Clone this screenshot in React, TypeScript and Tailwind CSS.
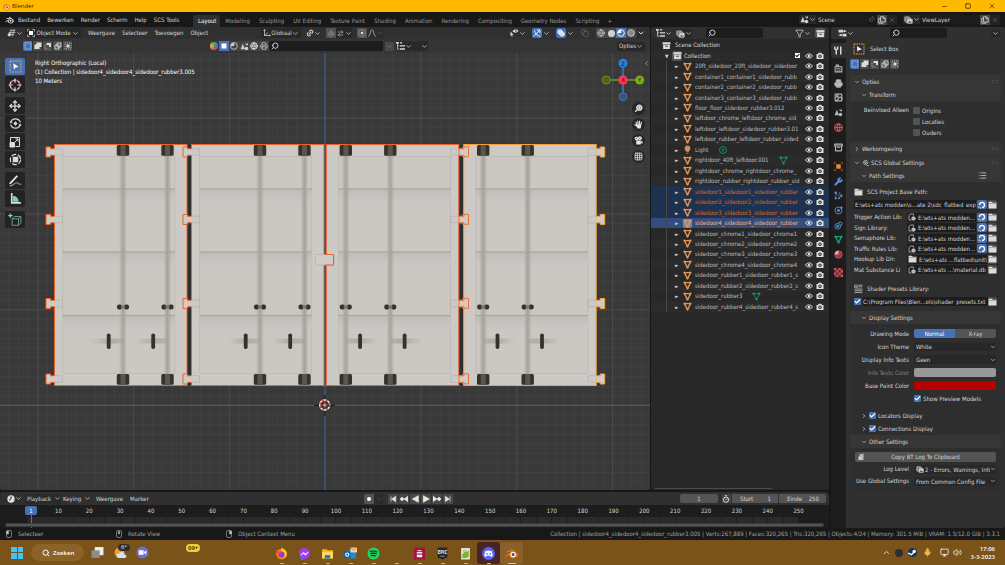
import type { ReactNode } from "react";
import {
  ArrowUpDown, Check, ChevronDown, ChevronRight, ChevronLeft, ChevronUp, Circle, Copy, Filter,
  Globe, Grid3x3, Image, Link2, Magnet, Mic, Minus, Move, Pin, Printer, Search,
  Square, Timer, Volume2, Wrench, X, Monitor, Archive, Blend, List,
} from "lucide-react";

const menus = ["Bestand", "Bewerken", "Render", "Scherm", "Help", "SCS Tools"];

const workspaces = [
  "Layout", "Modeling", "Sculpting", "UV Editing", "Texture Paint", "Shading", "Animation",
  "Rendering", "Compositing", "Geometry Nodes", "Scripting",
];

type Item = { name: string; kind?: "light"; data?: "mesh" | "light"; state?: "selected" | "active" };

const objects: Item[] = [
  { name: "20ft_sidedoor_20ft_sidedoor_sidedoor" },
  { name: "container1_container1_sidedoor_rubb" },
  { name: "container2_container2_sidedoor_rubb" },
  { name: "container3_container3_sidedoor_rubb" },
  { name: "floor_floor_sidedoor_rubber3.012" },
  { name: "leftdoor_chrome_leftdoor_chrome_sid" },
  { name: "leftdoor_leftdoor_sidedoor_rubber3.01" },
  { name: "leftdoor_rubber_leftdoor_rubber_sided" },
  { name: "Light", kind: "light", data: "light" },
  { name: "rightdoor_40ft_leftdoor.001", data: "mesh" },
  { name: "rightdoor_chrome_rightdoor_chrome_" },
  { name: "rightdoor_rubber_rightdoor_rubber_sid" },
  { name: "sidedoor1_sidedoor1_sidedoor_rubber", state: "selected" },
  { name: "sidedoor2_sidedoor2_sidedoor_rubber", state: "selected" },
  { name: "sidedoor3_sidedoor3_sidedoor_rubber", state: "selected" },
  { name: "sidedoor4_sidedoor4_sidedoor_rubber", state: "active" },
  { name: "sidedoor_chrome1_sidedoor_chrome1" },
  { name: "sidedoor_chrome2_sidedoor_chrome2" },
  { name: "sidedoor_chrome3_sidedoor_chrome3" },
  { name: "sidedoor_chrome4_sidedoor_chrome4" },
  { name: "sidedoor_rubber1_sidedoor_rubber1_s" },
  { name: "sidedoor_rubber2_sidedoor_rubber2_s" },
  { name: "sidedoor_rubber3", data: "mesh" },
  { name: "sidedoor_rubber4_sidedoor_rubber4_s" },
];

const libraries = [
  { label: "Trigger Action Lib:", path: "E:\\ets+ats modden...", snap: true },
  { label: "Sign Library:", path: "E:\\ets+ats modden...", snap: true },
  { label: "Semaphore Lib:", path: "E:\\ets+ats modden...", snap: true },
  { label: "Traffic Rules Lib:", path: "E:\\ets+ats modden...", snap: true },
  { label: "Hookup Lib Dir:", path: "E:\\ets+ats ...flatbed\\unit\\", folder: true },
  { label: "Mat Substance Li", path: "E:\\ets+ats ...\\material.db" },
];

/* ---------- icons ---------- */

function BlenderLogo({ className, mono }: { className?: string; mono?: boolean }) {
  const c = mono ? "#d8d8d8" : "#ea7600";
  return (
    <svg viewBox="0 0 24 20" className={className}>
      <path d="M1 14.500 11 7H3.500V5H13L10.500 3 12.200 1 22 8.500c3 3 2 10-6.500 10.500-4.500 0-8-3-8-6.500L3 16z" fill={c} />
      <circle cx="15" cy="12" r="5" fill={mono ? "#181818" : "#fff"} />
      <circle cx="15" cy="12" r="2.800" fill={mono ? c : "#265787"} />
    </svg>
  );
}

function Chev({ className = "size-[7px] text-[#bdbdbd]" }: { className?: string }) {
  return <ChevronDown className={`shrink-0 ${className}`} strokeWidth={3} />;
}

function EyeIcon() {
  return (
    <svg viewBox="0 0 16 16" className="size-[8px] shrink-0" fill="none" stroke="#e0e0e0" strokeWidth="1.800">
      <path d="M1 8c3-5.500 11-5.500 14 0-3 5.500-11 5.500-14 0z" /><circle cx="8" cy="8" r="2.600" fill="#e0e0e0" stroke="none" />
    </svg>
  );
}

function CameraIcon() {
  return (
    <svg viewBox="0 0 16 16" className="size-[8px] shrink-0">
      <path d="M1 4h3l1.500-2.500h5L12 4h3v10H1z" fill="#e0e0e0" /><circle cx="8" cy="8.500" r="3.300" fill="#2b2b2b" /><circle cx="8" cy="8.500" r="1.500" fill="#e0e0e0" />
    </svg>
  );
}

function VisibilityIcon() {
  return (
    <svg viewBox="0 0 18 16" className="h-[8px] w-[9px] shrink-0" fill="#dcdcdc">
      <path d="M5 5C8 0 14 0 17 4c-3 4-8 4-10 2z" /><circle cx="12" cy="4" r="1.600" fill="#303030" /><path d="M1 5l6 6.500-3 .3 1.500 3-1.600.8-1.400-3L1 14z" />
    </svg>
  );
}

function MagnifierIcon() {
  return (
    <svg viewBox="0 0 16 16" className="size-[9px]" fill="none" stroke="#e6e6e6" strokeWidth="2.400">
      <circle cx="9.500" cy="6.500" r="4.500" fill="#8a8a8a" /><path d="M6 10l-4 4M7.500 6.500h4M9.500 4.500v4" />
    </svg>
  );
}

function HandIcon() {
  return (
    <svg viewBox="0 0 16 16" className="size-[9px]" fill="none" stroke="#e6e6e6" strokeWidth="1.900" strokeLinecap="round">
      <path d="M5 9L3.500 4M7.200 8L6.700 2M9.500 8l.5-6M11.500 9l1.700-5M5 11L1.500 8.500" /><path d="M4.500 9h7.500l-1 5H7z" fill="#e6e6e6" />
    </svg>
  );
}

function MovieIcon() {
  return (
    <svg viewBox="0 0 16 16" className="size-[9px]" fill="#e6e6e6">
      <circle cx="4.500" cy="4.500" r="3.300" /><circle cx="10.500" cy="4" r="3.500" /><path d="M4 8h8v2l3-1.500V14l-3-1.500V15H4z" />
      <circle cx="4.500" cy="4.500" r="1" fill="#262626" /><circle cx="10.500" cy="4" r="1.100" fill="#262626" />
    </svg>
  );
}

function MeshIcon({ color, thin }: { color: string; thin?: boolean }) {
  return (
    <svg viewBox="0 0 16 16" className="size-[9px] shrink-0">
      <path d="M2.500 3h11L8 13.500z" fill="none" stroke={color} strokeWidth={thin ? 1.400 : 2.400} strokeLinejoin="round" />
      <g fill={color}><circle cx="2.800" cy="3" r="1.900" /><circle cx="13.200" cy="3" r="1.900" /><circle cx="8" cy="13.200" r="1.900" /></g>
    </svg>
  );
}

function LightIcon() {
  return (
    <svg viewBox="0 0 16 16" className="size-[9px] shrink-0" fill="#d9894e">
      <circle cx="8" cy="6" r="5" /><path d="M5.500 11h5v2h-5zM6.500 14h3v1.500h-3z" />
    </svg>
  );
}

function TreeIcon() {
  return (
    <svg viewBox="0 0 16 14" className="h-[8px] w-[9px] shrink-0" fill="#d8d8d8">
      <path d="M0 0h5v3H0zM7 5.500h9v2.500H7zM7 11h9v2.500H7zM7 .5h4v2H7zM2 3h1.300v10H2zM3 6h3v1.300H3zM3 11.700h3V13H3z" />
    </svg>
  );
}

function EditorIcon() {
  return (
    <svg viewBox="0 0 16 14" className="h-[8px] w-[9px] shrink-0" fill="none" stroke="#d0d0d0" strokeWidth="1.400">
      <path d="M5 2h10M3 6h12M1 10h12M8 1L4 13M13 1L9 13" /><circle cx="4" cy="10" r="2.600" fill="#e0e0e0" stroke="none" />
    </svg>
  );
}

function PropsIcon() {
  return (
    <svg viewBox="0 0 16 14" className="h-[8px] w-[9px] shrink-0" fill="#d8d8d8">
      <path d="M1 1h8v5H1zM10 3h5v1.500h-5zM8 8.500h7v4.500H8zM1 10h6v1.500H1z" />
      <circle cx="11.500" cy="3.700" r="2" /><circle cx="5" cy="10.700" r="2" />
    </svg>
  );
}

function FolderIcon() {
  return (
    <svg viewBox="0 0 16 14" className="h-[8px] w-[9px] shrink-0">
      <path d="M1 1h6l1.500 2H15v10H1z" fill="#dcdcdc" /><path d="M1 4.500h14" stroke="#777" strokeWidth="1" />
    </svg>
  );
}

function FileIcon() {
  return (
    <svg viewBox="0 0 16 16" className="size-[8px] shrink-0" fill="none" stroke="#c4c4c4" strokeWidth="1.600">
      <path d="M7 14H2V5l3-3h6v3" /><circle cx="11" cy="11" r="3.500" fill="#c4c4c4" /><circle cx="11" cy="11" r="1" fill="#1d1d1d" />
    </svg>
  );
}

function CollectionIcon() {
  return (
    <svg viewBox="0 0 16 16" className="size-[9px] shrink-0" fill="#dedede">
      <path d="M1 2h14v4H1zM2 7h12v7H2z" /><path d="M5.500 8.500h5v1.500h-5z" fill="#2b2b2b" />
    </svg>
  );
}

function SceneIcon({ color = "#d0d0d0" }: { color?: string }) {
  return (
    <svg viewBox="0 0 16 16" className="size-[9px] shrink-0" fill={color}>
      <path d="M5 3l4 10H1z" /><circle cx="11.500" cy="11.500" r="3.200" /><path d="M9 2l3 1.500 1-2.500 1.500 5-4-.5z" />
    </svg>
  );
}

function PagesIcon() {
  return (
    <svg viewBox="0 0 16 16" className="size-[8px] shrink-0" fill="none" stroke="#d8d8d8" strokeWidth="1.600">
      <path d="M4 5H1.500v9.500H10V13" /><path d="M5 1.500h6l3.500 3.500v7H5zM10.500 1.500V5.500h4" />
    </svg>
  );
}

function LayersIcon({ className = "size-[9px]" }: { className?: string }) {
  return (
    <svg viewBox="0 0 16 16" className={`shrink-0 ${className}`} fill="none" stroke="#d0d0d0" strokeWidth="1.500">
      <path d="M3 11H1.500V3.500h8V5M5 13H3.500V5.500h8V7" /><path d="M6 7.500h8.500v7H6z" fill="#d0d0d0" /><path d="M7 13.500l2.500-3 2 2 1-1 1.500 2z" fill="#333" stroke="none" />
    </svg>
  );
}

function SelectModes() {
  return (
    <div className="flex" role="group" aria-label="Selection mode">
      {[0, 1, 2, 3, 4].map((i) => (
        <button key={i} aria-label={`Mode ${i + 1}`} className={`grid size-[10px] place-items-center border-r border-[#2c2c2c] ${i === 0 ? "rounded-l-[2px] bg-[#4772b3]" : "bg-[#4c4c4c]"}`}>
          <svg viewBox="0 0 16 16" className="size-[8px]" fill="none" strokeWidth="1.800">
            {i === 0 && <path d="M2 2h12v12H2z" stroke="#b9d2ff" strokeDasharray="2 1.500" />}
            {i === 1 && <path d="M5 1h10v9h-4v4H1V5h4z" fill="#dcdcdc" />}
            {i === 2 && <><path d="M5 2h9v8h-4V6H5z" fill="#dcdcdc" /><path d="M2 6v8h7" stroke="#bbb" strokeDasharray="2 1.500" /></>}
            {i === 3 && <><path d="M2 6h8v8H2zM6 2h8v8H6z" stroke="#dcdcdc" /></>}
            {i === 4 && <><path d="M2 2h12v12H2z" stroke="#bbb" strokeDasharray="2 2" /><path d="M5 5h6v6H5z" fill="#dcdcdc" /></>}
          </svg>
        </button>
      ))}
    </div>
  );
}

function CursorBox({ className }: { className: string }) {
  return (
    <svg viewBox="0 0 24 24" className={className} fill="none">
      <path d="M2 2h20v20H2z" stroke="#eaa93c" strokeWidth="2" strokeDasharray="3 1.800" />
      <path d="M8 6l10 7-6 1-3 4z" fill="#fff" />
    </svg>
  );
}

/* ---------- small controls ---------- */

function Tick({ id, checked }: { id: string; checked?: boolean }) {
  return (
    <span className="relative size-[7px] shrink-0">
      <input id={id} type="checkbox" defaultChecked={checked} className="peer block size-[7px] appearance-none rounded-[1px] bg-[#545454] checked:bg-[#4772b3]" />
      <Check className="pointer-events-none absolute inset-0 hidden size-[7px] text-white peer-checked:block" strokeWidth={4} />
    </span>
  );
}

function SearchBox({ label, className }: { label: string; className: string }) {
  return (
    <label className={`flex items-center rounded-[2px] bg-[#1d1d1d] pl-[2px] ${className}`}>
      <Search className="size-[8px] shrink-0 -scale-x-100 text-[#c8c8c8]" strokeWidth={3} />
      <input aria-label={label} className="h-[9px] w-0 min-w-0 flex-1 bg-transparent outline-none" />
    </label>
  );
}

function Row({ label, id, dim, tight, children }: { label: string; id: string; dim?: boolean; tight?: boolean; children: ReactNode }) {
  return (
    <div className={`flex items-center gap-[5px] ${tight ? "h-[12px]" : "h-[13px]"}`}>
      <label htmlFor={id} className={`flex w-[54px] shrink-0 justify-end whitespace-nowrap ${dim ? "text-[#808080]" : ""}`}>{label}</label>
      {children}
    </div>
  );
}

function Select({ id, value, icon }: { id: string; value: string; icon?: ReactNode }) {
  return (
    <span className="flex h-[9px] min-w-0 flex-1 items-center rounded-[2px] bg-[#282828] pl-[2px]">
      {icon}
      <select id={id} className="h-[9px] w-0 min-w-0 flex-1 appearance-none bg-transparent leading-[9px] outline-none">
        <option>{value}</option>
      </select>
      <Chev className="size-[6px] text-[#bdbdbd]" />
    </span>
  );
}

function Heading({ children, sub, open = true, icon, end }: { children: ReactNode; sub?: boolean; open?: boolean; icon?: ReactNode; end?: ReactNode }) {
  return (
    <h3 className={`flex h-[13px] items-center gap-[2px] bg-[#363636] pr-[3px] ${sub ? "pl-[11px]" : "pl-[4px]"}`}>
      {open ? <Chev className="size-[6px] text-[#bdbdbd]" /> : <ChevronRight className="size-[6px] text-[#bdbdbd]" strokeWidth={3} />}
      {icon}
      <span className="flex-1 truncate">{children}</span>
      {end}
      {!sub && <span className="h-[3px] w-[6px] border-y border-dotted border-[#4c4c4c]" />}
    </h3>
  );
}

/* ---------- 3D scene ---------- */

function Hinge({ y, stroke }: { y: number; stroke: string }) {
  return (
    <g>
      <path d={`M-8.500 ${y - 5}h4.500v1.800h4v6.500h-4v1.700h-4.500z`} fill="#cfccc7" stroke={stroke} strokeWidth="1" />
      <rect x="-.5" y={y - 3} width="8.500" height="6" fill="#cdcac5" />
      <path d={`M0 ${y - 3.300}h8v6.600H0`} fill="none" stroke="#aaa7a2" strokeWidth=".5" />
    </g>
  );
}

function Door({ x, stroke, flip }: { x: number; stroke: string; flip?: boolean }) {
  return (
    <g transform={flip ? `translate(${x + 132.500} 0) scale(-1 1)` : `translate(${x} 0)`}>
      <rect x="0" y="117.500" width="132.500" height="241" fill="#cdcac5" stroke={stroke} strokeWidth="1" />
      <rect x="8.300" y="129.500" width="112" height="217" fill="#cbc8c3" stroke="#b4b1ac" strokeWidth=".6" />
      {[162, 225, 288.500].map((y) => (
        <g key={y}>
          <rect x="8.300" y={y} width="112" height="12" fill="url(#rib)" />
          <rect x="8.300" y={y - 0.600} width="112" height="1.200" fill="#a9a6a0" />
          <rect x="8.300" y={y + 11.500} width="112" height="1.300" fill="#c6c8cd" />
        </g>
      ))}
      {[68.500, 113].map((bx) => (
        <g key={bx}>
          <rect x={bx - 4} y="118" width="8" height="240" fill="url(#rod)" />
          {[118, 347].map((y) => (
            <g key={y}>
              <rect x={bx - 6.200} y={y} width="12.400" height="10.800" rx="1.500" fill="#35322a" />
              <rect x={bx - 2.500} y={y} width="5" height="10.800" fill="#59564e" />
            </g>
          ))}
          <rect x={bx - 6} y="277.500" width="5" height="5" rx="2" fill="#35322a" />
          <rect x={bx + 1} y="277.500" width="5" height="5" rx="2" fill="#35322a" />
          <rect x={bx - 2} y="278.500" width="4" height="3" fill="#77746d" />
          <rect x={bx - 33} y="311.500" width="33" height="5" fill="url(#arm)" />
          <rect x={bx - 16.200} y="306.500" width="3.800" height="15.500" rx="1.800" fill="#35322a" />
        </g>
      ))}
      {[125, 192.500, 276.500, 352].map((y) => <Hinge key={y} y={y} stroke={stroke} />)}
    </g>
  );
}

function Scene() {
  return (
    <svg viewBox="0 0 650 463" preserveAspectRatio="xMidYMid slice" className="absolute inset-0 size-full">
      <defs>
        <pattern id="minor" width="9.580" height="9.580" patternUnits="userSpaceOnUse" x="324.700" y="378">
          <path d="M0 0H9.580M0 0V9.580" stroke="#454545" strokeWidth="1" />
        </pattern>
        <pattern id="major" width="95.800" height="95.800" patternUnits="userSpaceOnUse" x="324.700" y="378">
          <path d="M0 0H95.800M0 0V95.800" stroke="#4e4e4e" strokeWidth="1.400" />
        </pattern>
        <linearGradient id="rod">
          <stop offset="0" stopColor="#a5a299" stopOpacity="0" /><stop offset=".5" stopColor="#a5a29b" /><stop offset="1" stopColor="#a5a299" stopOpacity="0" />
        </linearGradient>
        <linearGradient id="arm" x1="0" x2="1">
          <stop offset="0" stopColor="#a5a299" stopOpacity="0" /><stop offset=".6" stopColor="#a09d95" stopOpacity=".7" /><stop offset="1" stopColor="#a5a299" stopOpacity=".5" />
        </linearGradient>
        <linearGradient id="rib" x2="0" y2="1">
          <stop offset="0" stopColor="#c0bdb8" /><stop offset="1" stopColor="#cac7c2" />
        </linearGradient>
      </defs>
      <rect width="650" height="463" fill="#393939" />
      <rect width="650" height="463" fill="url(#minor)" />
      <rect width="650" height="463" fill="url(#major)" />
      <path d="M0 378.300H650" stroke="#4e6630" strokeWidth="1.200" />
      <path d="M324.800 0V463" stroke="#3a5778" strokeWidth="1.300" />
      <path d="M189 118V358M461.300 118V358" stroke="#2f2f2f" strokeWidth="4" />
      <Door x={54.500} stroke="#f0602c" />
      <Door x={191.500} stroke="#f0602c" />
      <Door x={326.300} stroke="#f0602c" flip />
      <Door x={463.700} stroke="#f3a13f" flip />
      {/* the hinges of door 3 lie over door 4 */}
      {[125, 192.500, 276.500, 352].map((y) => (
        <path key={y} d={`M459 ${y - 3.200}h5v-2h4.500v10h-4.500v-1.500h-5z`} fill="#cfccc7" stroke="#f0703a" strokeWidth="1" />
      ))}
      <path d="M325 118V358" stroke="#65595c" strokeWidth="1.400" />
      <rect x="315.500" y="227.500" width="18.500" height="10.500" rx="1" fill="#d0cdc8" stroke="#b3b0aa" strokeWidth=".7" />
      <path d="M325 227.500h8.500v10.500H325" fill="none" stroke="#f0602c" />
      <path d="M314 378.300h7M328 378.300h7M324.800 368v6M324.800 383v6" stroke="#111" strokeWidth="1" />
      <circle cx="324.700" cy="378" r="5" fill="none" stroke="#fff" strokeWidth="1.300" />
      <circle cx="324.700" cy="378" r="5" fill="none" stroke="#d33" strokeWidth="1.300" strokeDasharray="2 2" />
      <circle cx="324.700" cy="378" r="1.500" fill="#ff9a1e" />
    </svg>
  );
}

function Gizmo() {
  return (
    <svg viewBox="0 0 44 44" className="size-[44px]" fontSize="6" textAnchor="middle">
      <path d="M5 22h34" stroke="#6b9a1c" strokeWidth="1.400" /><path d="M22 5v34" stroke="#3d7fc9" strokeWidth="1.400" />
      <circle cx="5.300" cy="22" r="4" fill="#4b611f" stroke="#6b9a1c" />
      <circle cx="22" cy="38.700" r="4" fill="#38557a" stroke="#3873ba" />
      <circle cx="22" cy="5.300" r="4.500" fill="#2c7fdd" /><circle cx="38.700" cy="22" r="4.500" fill="#79ae13" /><circle cx="22" cy="22" r="4.700" fill="#ff3653" />
      <g fill="#111"><text x="22" y="7.500">Z</text><text x="38.700" y="24.200">Y</text><text x="22" y="24.200">X</text></g>
    </svg>
  );
}

const tools: { name: string; art: ReactNode }[][] = [
  [
    { name: "Select Box", art: <CursorBox className="size-[13px]" /> },
    { name: "Cursor", art: <svg viewBox="0 0 24 24" className="size-[14px]" fill="none" strokeWidth="2"><circle cx="12" cy="12" r="8.500" stroke="#e8e8e8" /><circle cx="12" cy="12" r="8.500" stroke="#c2453c" strokeDasharray="4 4" /><path d="M12 1v7M12 16v7M1 12h7M16 12h7" stroke="#ddd" /></svg> },
  ],
  [
    { name: "Move", art: <Move className="size-[12px]" strokeWidth={2.500} /> },
    { name: "Rotate", art: <svg viewBox="0 0 24 24" className="size-[13px]" fill="none" stroke="currentColor" strokeWidth="2.200"><path d="M3 10a9.500 9.500 0 0 1 18 0M21 14a9.500 9.500 0 0 1-18 0" /><path d="M12 8l4 4-4 4-4-4zM1 8l2 4 4-3zM23 16l-2-4-4 3z" fill="currentColor" stroke="none" /></svg> },
    { name: "Scale", art: <svg viewBox="0 0 24 24" className="size-[12px]" fill="none" stroke="currentColor" strokeWidth="2"><path d="M3 12V3h18v18h-8" /><path d="M2 13h9v9H2z" fill="currentColor" /><path d="M12 12l6-6M13 6h5v5" /></svg> },
    { name: "Transform", art: <svg viewBox="0 0 24 24" className="size-[13px]" fill="none" stroke="currentColor" strokeWidth="2.200"><circle cx="12" cy="12" r="9.500" strokeDasharray="9 3" /><path d="M8 8h8v8H8z" fill="currentColor" /></svg> },
  ],
  [
    { name: "Annotate", art: <svg viewBox="0 0 24 24" className="size-[14px]" fill="none" strokeWidth="3"><path d="M3 17L16 3" stroke="#eee" /><path d="M3 20c6 2 7-6 12-5 3 1 4 4 8 2" stroke="#6fa58c" strokeWidth="2" /></svg> },
    { name: "Measure", art: <svg viewBox="0 0 24 24" className="size-[13px]"><path d="M5 2v18h17" stroke="#ddd" strokeWidth="3" fill="none" /><path d="M7 7a12 12 0 0 1 11 11H7z" fill="#7fd1a6" /></svg> },
  ],
  [
    { name: "Add Cube", art: <svg viewBox="0 0 24 24" className="size-[14px]" fill="none" stroke="#6fa58c" strokeWidth="1.600"><path d="M7 10h11v11H7zM7 10l4-4h11v11l-4 4M18 10l4-4" /><path d="M4 1v7M.5 4.500h7" stroke="#8fe0b4" strokeWidth="2" /></svg> },
  ],
];

function Viewport() {
  return (
    <section aria-label="3D viewport" className="relative flex min-w-0 flex-1 flex-col overflow-hidden rounded-[3px] bg-[#393939]">
      <Scene />
      <header className="relative flex h-[12px] items-center bg-[#303030] pl-[7px] pr-[5px]">
        <button aria-label="Editor type" className="flex w-[18px] items-center"><EditorIcon /><Chev /></button>
        <button className="flex h-[10px] w-[56px] items-center justify-between rounded-[2px] bg-[#282828] px-[2px]">
          <svg viewBox="0 0 16 16" className="size-[8px]"><path d="M4 4h8v8H4z" fill="#fff" /><path d="M1 5V1h4M11 1h4v4M15 11v4h-4M5 15H1v-4" fill="none" stroke="#ccc" strokeWidth="1.500" /></svg>
          Object Mode<Chev />
        </button>
        <nav className="ml-[7px] flex w-[173px] gap-[7px]">
          {["Weergave", "Selecteer", "Toevoegen", "Object"].map((m) => <button key={m}>{m}</button>)}
        </nav>
        <div className="flex items-center gap-[5px]">
          <button className="flex h-[10px] w-[40px] items-center justify-between rounded-[2px] bg-[#282828] px-[2px]">
            <svg viewBox="0 0 16 16" className="size-[8px]" fill="none" stroke="#ccc" strokeWidth="1.600"><path d="M3 1v12h12M3 13l7-6" /><path d="M1 3l2-2 2 2M13 11l2 2-2 2" /></svg>
            Globaal<Chev />
          </button>
          <button aria-label="Pivot" className="flex items-center"><Link2 className="size-[8px] -rotate-45" strokeWidth={3} /><Chev /></button>
          <button aria-label="Snap" className="flex h-[10px] w-[26px] items-center justify-between rounded-[2px] bg-[#282828]">
            <span className="grid size-[10px] place-items-center bg-[#545454]"><Magnet className="size-[7px] rotate-180 text-[#aaa]" /></span><ArrowUpDown className="size-[7px] rotate-90" /><Chev />
          </button>
          <button aria-label="Proportional editing" className="flex h-[10px] w-[26px] items-center justify-between rounded-[2px] bg-[#2c2c2c]">
            <span className="grid size-[10px] place-items-center bg-[#545454]"><svg viewBox="0 0 12 12" className="size-[8px]"><circle cx="6" cy="6" r="5" fill="none" stroke="#999" /><circle cx="6" cy="6" r="2" fill="#ddd" /></svg></span>
            <svg viewBox="0 0 12 12" className="size-[8px]" fill="none" stroke="#999" strokeWidth="1.500"><path d="M0 11c4 0 3-10 6-10s2 10 6 10" /></svg>
            <Chev className="size-[6px] text-[#666]" />
          </button>
        </div>
        <div className="ml-auto flex items-center gap-[6px]">
          <button aria-label="Visibility" className="flex items-center"><VisibilityIcon /><Chev /></button>
          <button aria-label="Gizmos" className="flex items-center gap-[1px]"><span className="grid size-[10px] place-items-center rounded-[2px] bg-[#4772b3]"><svg viewBox="0 0 12 12" className="size-[8px]" fill="none" stroke="#fff" strokeWidth="1.300"><path d="M1 11L10 2M6 1.500h4.500V6M2 2c1 5 4 8 9 9" /></svg></span><Chev /></button>
          <button aria-label="Overlays" className="flex items-center gap-[1px]"><span className="grid size-[10px] place-items-center rounded-[2px] bg-[#4772b3]"><Blend className="size-[8px] text-white" fill="#c8daf5" /></span><Chev /></button>
          <button aria-label="X-ray" className="mx-[1px]"><Copy className="size-[8px] text-[#707070]" /></button>
          <div className="flex items-center">
            <button aria-label="Wireframe" className="grid size-[10px] place-items-center bg-[#484848]"><Globe className="size-[8px]" /></button>
            <button aria-label="Solid" className="grid size-[10px] place-items-center bg-[#484848]"><span className="size-[7px] rounded-full bg-[#d0d0d0]" /></button>
            <button aria-label="Material preview" className="grid size-[10px] place-items-center bg-[#4772b3]"><svg viewBox="0 0 12 12" className="size-[8px]"><circle cx="6" cy="6" r="5" fill="none" stroke="#fff" strokeWidth="1.300" /><path d="M6 1a5 5 0 0 1 0 5H1a5 5 0 0 1 5-5" fill="#fff" /></svg></button>
            <button aria-label="Rendered" className="grid size-[10px] place-items-center bg-[#484848]"><svg viewBox="0 0 12 12" className="size-[8px]"><circle cx="6" cy="6" r="5" fill="#888" stroke="#ccc" strokeWidth="1.300" /></svg></button>
            <Chev className="ml-[1px] size-[8px]" />
          </div>
        </div>
      </header>
      <div className="relative flex h-[14px] items-center bg-[#343434]/90 pl-[23px] pr-[5px]">
        <SelectModes />
        <div className="ml-[137px] flex items-center">
          <span className="mr-[1px] size-[8px] rounded-full bg-[conic-gradient(#4caf50,#2f7fd0,#e04c3c,#e8b23a,#4caf50)]" />
          {[0, 1, 2, 3, 4].map((i) => (
            <button key={i} aria-label={`Filter ${i + 1}`} className={`grid size-[10px] place-items-center ${i === 0 ? "bg-[#4772b3]" : "bg-[#444]"}`}>
              {i === 0 && <svg viewBox="0 0 16 16" className="size-[8px]"><path d="M3 3h10v10H3z" fill="#fff" /></svg>}
              {i === 1 && <svg viewBox="0 0 12 12" className="size-[8px]"><circle cx="6" cy="6" r="5" fill="none" stroke="#ccc" strokeWidth="1.300" /><path d="M6 1a5 5 0 0 1 0 5H1a5 5 0 0 1 5-5" fill="#ccc" /></svg>}
              {i === 2 && <SceneIcon />}
              {i === 3 && <Globe className="size-[8px]" strokeWidth={3} />}
              {i === 4 && <Printer className="size-[8px]" />}
            </button>
          ))}
          <SearchBox label="Filter objects" className="h-[10px] w-[114px]" />
          <button aria-label="Hide" className="ml-[2px] grid h-[9px] w-[9px] place-items-center bg-[#484848]"><ChevronDown className="size-[7px] text-[#888]" /></button>
          <button aria-label="Tree" className="ml-[2px] flex h-[10px] w-[16px] items-center rounded-[2px] bg-[#282828]"><TreeIcon /><Chev /></button>
          <button aria-label="More" className="flex h-[10px] w-[16px] items-center justify-end rounded-[2px] bg-[#282828]"><Chev /></button>
        </div>
        <button className="ml-auto flex h-[9px] w-[28px] items-center justify-between rounded-[2px] bg-[#282828] px-[2px]">Opties<Chev /></button>
      </div>

      <div className="relative flex flex-1 items-start pl-[5px] pr-[5px] pt-[5px]">
        <div className="flex flex-col gap-[4px]">
          {tools.map((group, g) => (
            <div key={g} className="flex flex-col gap-px">
              {group.map((t, i) => (
                <button key={t.name} aria-label={t.name} className={`grid h-[17px] w-[20px] place-items-center rounded-[2px] text-[#dcdcdc] ${g + i === 0 ? "bg-[#4772b3]" : "bg-[#232323]"}`}>{t.art}</button>
              ))}
            </div>
          ))}
        </div>
        <div className="ml-[10px] text-white">
          <p className="leading-[9px]">Right Orthographic (Local)</p>
          <p className="leading-[9px]">(1) Collection | sidedoor4_sidedoor4_sidedoor_rubber3.005</p>
          <p className="leading-[9px]">10 Meters</p>
        </div>
        <div className="ml-auto flex flex-col items-end">
          <Gizmo />
          <div className="flex flex-col gap-[3px]">
            {[<MagnifierIcon key="z" />, <HandIcon key="h" />, <MovieIcon key="v" />, <Grid3x3 key="g" className="size-[9px]" />].map((icon, i) => (
              <button key={i} aria-label={["Zoom", "Pan", "Camera", "Grid"][i]} className="grid size-[13px] place-items-center rounded-full bg-[#262626] text-[#e6e6e6]">{icon}</button>
            ))}
          </div>
        </div>
      </div>
      <button aria-label="Open sidebar" className="absolute right-0 top-[33px]"><ChevronLeft className="size-[7px]" /></button>
    </section>
  );
}

/* ---------- outliner ---------- */

function Outliner() {
  return (
    <section aria-label="Outliner" className="flex w-[178px] shrink-0 flex-col rounded-[3px] bg-[#282828]">
      <header className="flex h-[12px] items-center rounded-t-[3px] bg-[#303030] pl-[5px] pr-[4px]">
        <button aria-label="Editor type" className="flex w-[20px] items-center"><TreeIcon /><Chev /></button>
        <button aria-label="Display mode" className="flex w-[16px] items-center rounded-[2px] bg-[#282828]"><LayersIcon /><Chev /></button>
        <SearchBox label="Search outliner" className="ml-[14px] h-[10px] w-[57px]" />
        <button aria-label="Filter" className="ml-auto flex items-center"><Filter className="size-[9px]" /><Chev /></button>
        <button aria-label="New collection" className="ml-[4px] grid size-[10px] place-items-center rounded-[2px] bg-[#545454]"><CollectionIcon /></button>
      </header>
      <ul className="mt-[1px] grid h-[272px] auto-rows-fr">
        <li className="flex items-center gap-[4px] pl-[11px]"><CollectionIcon />Scene Collection</li>
        <li className="flex items-center bg-[#2b2b2b] pl-[14px] pr-[5px]">
          <span className="w-[7px] text-[5px]">▼</span>
          <span className="mr-[2px] grid size-[10px] place-items-center rounded-[2px] bg-[#555]"><CollectionIcon /></span>Collection
          <span className="ml-auto flex items-center gap-[3px]">
            <input type="checkbox" aria-label="Include collection" defaultChecked className="size-[5px] appearance-none bg-white" />
            <Check className="pointer-events-none -ml-[8px] mr-[2px] size-[5px] text-black" strokeWidth={5} />
            <EyeIcon /><CameraIcon />
          </span>
        </li>
        {objects.map((o, i) => (
          <li
            key={o.name}
            className={`flex min-h-0 items-center pl-[15px] pr-[5px] ${
              o.state === "active" ? "bg-[#334d80] text-[#ffb566]" : o.state === "selected" ? "bg-[#1e3250] text-[#dd6a15]" : i % 2 ? "bg-[#2b2b2b] text-[#bdbdbd]" : "text-[#bdbdbd]"
            }`}
          >
            <span className="h-full w-[9px] border-l border-[#484848]" />
            <span className="w-[8px] text-[5px] text-[#d0d0d0]">►</span>
            <span className={`mr-[3px] rounded-[2px] ${o.state === "active" ? "bg-[#7787a5]" : ""}`}>{o.kind === "light" ? <LightIcon /> : <MeshIcon color="#e19658" />}</span>
            <button className="whitespace-nowrap text-left">{o.name}</button>
            {o.data === "mesh" && <span className="ml-[10px]"><MeshIcon color="#10a37c" thin /></span>}
            {o.data === "light" && <svg viewBox="0 0 16 16" className="ml-[11px] size-[8px]" fill="none" stroke="#10a37c" strokeWidth="1.600"><circle cx="8" cy="8" r="7" /><circle cx="8" cy="7" r="1.500" /><path d="M8 9v3" /></svg>}
            <span className="ml-auto flex shrink-0 items-center gap-[3px]"><EyeIcon /><CameraIcon /></span>
          </li>
        ))}
      </ul>
      <div className="mt-auto mb-[1px] ml-[4px] h-[1px] w-[117px] bg-[#4a4a4a]" />
    </section>
  );
}

/* ---------- timeline ---------- */

function Timeline() {
  const frames = Array.from({ length: 25 }, (_, i) => (i + 1) * 10);
  return (
    <section aria-label="Timeline" className="flex h-[36px] flex-col rounded-[3px] bg-[#1d1d1d]">
      <header className="flex h-[13px] items-center rounded-t-[3px] bg-[#303030] pl-[7px] pr-[3px]">
        <button aria-label="Editor type" className="flex w-[18px] items-center">
          <svg viewBox="0 0 12 12" className="size-[8px]"><circle cx="6" cy="6" r="5.500" fill="#e0e0e0" /><path d="M6 2v4l-3 2" stroke="#222" strokeWidth="1.400" fill="none" /></svg><Chev />
        </button>
        <button className="flex h-[10px] w-[36px] items-center justify-between rounded-[2px] bg-[#2a2a2a] pl-[2px]">Playback<Chev /></button>
        <button className="flex h-[10px] w-[30px] items-center justify-between rounded-[2px] pl-[2px]">Keying<Chev /></button>
        <button className="ml-[5px]">Weergave</button>
        <button className="ml-[7px]">Marker</button>
        <div className="mx-auto flex items-center pr-[11px]">
          <button aria-label="Auto keying" className="grid h-[10px] w-[10px] place-items-center rounded-l-[2px] bg-[#545454]"><span className="size-[4px] rounded-full bg-white" /></button>
          <span className="grid h-[10px] w-[9px] place-items-center bg-[#2c2c2c]"><Chev className="size-[6px] text-[#555]" /></span>
          <div className="ml-[5px] flex gap-px">
            {["M3 2v8M10 2L4 6l6 4z", "M0 6l3-3 3 3-3 3zM12 2L6 6l6 4z", "M11 1L2 6l9 5z", "M2 1l9 5-9 5z", "M0 2l6 4-6 4zM12 6L9 3 6 6l3 3z", "M9 2v8M2 2l6 4-6 4z"].map((d, i) => (
              <button key={d} aria-label={["First", "Previous key", "Reverse", "Play", "Next key", "Last"][i]} className="grid size-[10px] place-items-center bg-[#484848]">
                <svg viewBox="0 0 12 12" className="size-[8px]" fill="#e6e6e6" stroke="#e6e6e6" strokeWidth="1"><path d={d} /></svg>
              </button>
            ))}
          </div>
        </div>
        <div className="flex items-center">
          <input aria-label="Current frame" defaultValue="1" className="h-[9px] w-[38px] rounded-[2px] bg-[#545454] text-center" />
          <button aria-label="Use preview range" className="ml-[4px] grid size-[9px] place-items-center bg-[#444]"><Timer className="size-[8px]" strokeWidth={3} /></button>
          <label className="ml-px flex h-[9px] w-[46px] items-center bg-[#545454] pl-[8px] pr-[7px]">Start<input defaultValue="1" className="w-0 min-w-0 flex-1 bg-transparent text-right" /></label>
          <label className="ml-px flex h-[9px] w-[47px] items-center rounded-r-[2px] bg-[#545454] pl-[8px] pr-[7px]">Einde<input defaultValue="250" className="w-0 min-w-0 flex-1 bg-transparent text-right" /></label>
        </div>
      </header>
      <div className="relative flex-1">
        <div className="grid h-[12px] grid-cols-[repeat(25,1fr)] pl-[43px] pr-[15px]">
          {frames.map((f) => <span key={f} className="grid place-items-center">{f}</span>)}
        </div>
        <div className="mr-[30px] ml-[28px] grid h-[6px] grid-cols-[repeat(50,1fr)] bg-[#2a2a2a]">
          {Array.from({ length: 50 }, (_, i) => <span key={i} className="border-r border-[#1f1f1f]" />)}
        </div>
        <div className="absolute left-[25px] top-[1px] flex flex-col items-center">
          <span className="grid h-[9px] w-[12px] place-items-center rounded-[2px] bg-[#4772b3] text-white">1</span>
          <span className="h-[13px] w-px bg-[#4772b3]" />
        </div>
        <div className="relative mx-[5px] h-[4px] rounded-full border border-[#3a3a3a] bg-[#545454]" />
      </div>
    </section>
  );
}

/* ---------- properties ---------- */

function PropertyTabs() {
  return (
    <nav aria-label="Property tabs" className="flex w-[15px] shrink-0 flex-col items-center bg-[#1d1d1d] pt-[4px] text-[#b8b8b8]">
      <button aria-label="Tool" className="grid h-[15px] w-[15px] place-items-center rounded-l-[3px] bg-[#303030]">
        <svg viewBox="0 0 16 16" className="size-[9px]" fill="none" stroke="#e0e0e0" strokeWidth="2.500"><path d="M4 15V7M1.500 1v4l2.500 2 2.500-2V1M12 15V8M12 8V1" /></svg>
      </button>
      <div className="mt-[3px] grid h-[74px] auto-rows-fr place-items-center">
        <button aria-label="Render"><svg viewBox="0 0 16 16" className="size-[9px]" fill="none" stroke="#b8b8b8" strokeWidth="1.800"><path d="M2 5h12v9H2zM4 4V2h4v2" /><path d="M5 8h6v3H5z" strokeWidth="1.200" /></svg></button>
        <button aria-label="Output"><Printer className="size-[9px]" fill="#b8b8b8" /></button>
        <button aria-label="View layer"><Image className="size-[9px]" strokeWidth={3} /></button>
        <button aria-label="Scene"><SceneIcon color="#b8b8b8" /></button>
        <button aria-label="World"><Globe className="size-[9px] text-[#d4525c]" strokeWidth={3} /></button>
      </div>
      <button aria-label="Collection" className="mt-[5px] grid h-[15px] place-items-center"><Archive className="size-[9px]" strokeWidth={3} /></button>
      <div className="mt-[4px] grid h-[103px] auto-rows-fr place-items-center">
        <button aria-label="Object"><svg viewBox="0 0 16 16" className="size-[9px]"><path d="M4 4h8v8H4z" fill="#e08a3c" /><path d="M1 4V1h3M12 1h3v3M15 12v3h-3M4 15H1v-3" fill="none" stroke="#a05f28" strokeWidth="1.500" /></svg></button>
        <button aria-label="Modifiers"><Wrench className="size-[9px] text-[#5b8fe0]" fill="#5b8fe0" /></button>
        <button aria-label="Particles"><svg viewBox="0 0 16 16" className="size-[9px]" fill="#5b8fe0" stroke="#5b8fe0"><path d="M3 2v11M3 3c2 5 5 6 10 6" fill="none" /><circle cx="3" cy="3" r="1.800" /><circle cx="3" cy="13" r="1.500" /><circle cx="9" cy="12.500" r="1.500" /><circle cx="13" cy="8.500" r="1.800" /><circle cx="10" cy="4" r="1" /></svg></button>
        <button aria-label="Physics"><svg viewBox="0 0 16 16" className="size-[9px]" fill="none" stroke="#5b8fe0" strokeWidth="1.600"><circle cx="8" cy="8" r="6.200" /><circle cx="8" cy="8" r="2" fill="#5b8fe0" /><circle cx="13" cy="3" r="1.500" fill="#5b8fe0" /></svg></button>
        <button aria-label="Constraints"><svg viewBox="0 0 16 16" className="size-[9px]" fill="none" stroke="#5b8fe0" strokeWidth="1.600"><circle cx="6.500" cy="9.500" r="5" /><circle cx="6.500" cy="9.500" r="1.800" fill="#5b8fe0" /><path d="M7 4l5-2.500 2.500 2.500L12 9" /></svg></button>
        <button aria-label="Data" className="grid place-items-center"><MeshIcon color="#12a37c" /></button>
        <button aria-label="Material"><svg viewBox="0 0 12 12" className="size-[9px]"><circle cx="6" cy="6" r="5" fill="#9c3a42" stroke="#d4525c" /><path d="M6 1a5 5 0 0 0-5 5h5z" fill="#f0a0a6" /></svg></button>
      </div>
      <button aria-label="Texture" className="mt-[3px] grid h-[15px] place-items-center">
        <svg viewBox="0 0 8 8" className="size-[9px]"><path d="M0 0h8v8H0z" fill="#58282c" /><path d="M0 0h2v2H0zM4 0h2v2H4zM2 2h2v2H2zM6 2h2v2H6zM0 4h2v2H0zM4 4h2v2H4zM2 6h2v2H2zM6 6h2v2H6z" fill="#d4525c" /></svg>
      </button>
    </nav>
  );
}

function SnapButton() {
  return (
    <button aria-label="Relative path" className="grid h-[9px] w-[10px] shrink-0 place-items-center rounded-[2px] bg-[#4772b3]">
      <svg viewBox="0 0 16 16" className="size-[8px]" fill="none" stroke="#fff" strokeWidth="2.600"><path d="M3 8c0-7 10-7 10 0 0 3-2 5-5 5" /><path d="M2 11v3M5 13v2" strokeWidth="1.500" /></svg>
    </button>
  );
}

function BrowseButton() {
  return <button aria-label="Browse" className="grid h-[9px] w-[9px] shrink-0 place-items-center rounded-r-[2px] bg-[#484848]"><FolderIcon /></button>;
}

function Properties() {
  return (
    <section aria-label="Properties" className="flex w-[174px] shrink-0 flex-col rounded-[3px] bg-[#303030]">
      <header className="flex h-[12px] items-center rounded-t-[3px] bg-[#303030] pl-[7px] pr-[5px]">
        <button aria-label="Editor type" className="flex items-center"><PropsIcon /><Chev /></button>
        <SearchBox label="Search properties" className="ml-[36px] h-[10px] w-[57px]" />
        <button aria-label="Options" className="ml-auto rounded-[2px] bg-[#282828] px-[1px]"><Chev /></button>
      </header>
      <div className="flex flex-1">
        <PropertyTabs />
        <div className="min-w-0 flex-1 pl-[4px] pr-[4px]">
          <div className="flex h-[19px] items-center gap-[5px] pl-[3px] pt-px"><CursorBox className="size-[12px]" />Select Box</div>
          <div className="pb-[6px] pt-[1px]"><SelectModes /></div>

          <div className="overflow-hidden rounded-[2px] bg-[#2e2e2e]">
            <Heading>Opties</Heading>
            <Heading sub>Transform</Heading>
            <div className="flex gap-[4px] pb-[3px] pl-[5px] pt-[4px]">
              <span className="flex w-[54px] justify-end whitespace-nowrap leading-[10px]">Beïnvloed Alleen</span>
              <div className="flex flex-col">
                {["Origins", "Locaties", "Ouders"].map((n) => (
                  <div key={n} className="flex h-[11px] items-center gap-[2px]"><Tick id={n} /><label htmlFor={n}>{n}</label></div>
                ))}
              </div>
            </div>
          </div>

          <div className="mt-[1px] overflow-hidden rounded-[2px]"><Heading open={false}>Werkomgeving</Heading></div>

          <div className="mt-[1px] overflow-hidden rounded-[2px] bg-[#2e2e2e]">
            <Heading icon={<svg viewBox="0 0 16 16" className="size-[7px]" fill="none" stroke="#ddd" strokeWidth="2"><circle cx="8" cy="8" r="5" strokeDasharray="3 1.500" /><circle cx="8" cy="8" r="2" /><path d="M11 15h4" /></svg>}>SCS Global Settings</Heading>
            <Heading sub end={<List className="mr-[11px] size-[9px]" />}>Path Settings</Heading>
            <div className="px-[4px] pb-[4px] pt-[4px]">
              <div className="flex h-[11px] items-center gap-[4px]"><FolderIcon /><label htmlFor="base">SCS Project Base Path:</label></div>
              <div className="mt-[2px] flex h-[11px] items-center">
                <input id="base" defaultValue={"E:\\ets+ats modden\\s...ate 2\\sdc_flatbed_exp"} className="h-[9px] w-0 min-w-0 flex-1 rounded-l-[2px] bg-[#1d1d1d] pl-px" />
                <span className="ml-px flex gap-px"><SnapButton /><BrowseButton /></span>
              </div>
              <div className="mt-[2px] grid h-[63px] auto-rows-fr">
                {libraries.map((l) => (
                  <div key={l.label} className="flex items-center">
                    <label htmlFor={l.label} className="w-[53px] shrink-0 whitespace-nowrap">{l.label}</label>
                    <span className="flex h-[9px] min-w-0 flex-1 items-center gap-[2px] rounded-l-[2px] bg-[#1d1d1d] pl-px">
                      {l.folder ? <FolderIcon /> : <FileIcon />}
                      <input id={l.label} defaultValue={l.path} className="h-[9px] w-0 min-w-0 flex-1 bg-transparent" />
                    </span>
                    <span className="ml-px flex gap-px">{l.snap && <SnapButton />}<BrowseButton /></span>
                  </div>
                ))}
              </div>
              <div className="mt-[8px] flex h-[11px] items-center gap-[4px]">
                <svg viewBox="0 0 16 16" className="size-[9px]" fill="none" stroke="#bbb" strokeWidth="1.500"><path d="M1 2h5v4H1zM8 2h7M8 5h7M1 9h14M1 12h14M1 15h14" /></svg>
                <label htmlFor="shader">Shader Presets Library:</label>
              </div>
              <div className="mt-[2px] flex h-[11px] items-center">
                <Tick id="use-shader" checked />
                <label htmlFor="use-shader" className="sr-only">Use shader presets</label>
                <input id="shader" defaultValue={"C:\\Program Files\\Blen...ols\\shader_presets.txt"} className="ml-[2px] h-[9px] w-0 min-w-0 flex-1 rounded-l-[2px] bg-[#1d1d1d]" />
                <BrowseButton />
              </div>
            </div>

            <Heading sub>Display Settings</Heading>
            <div className="px-[5px] pt-[3px]">
              <div className="flex h-[13px] items-center gap-[5px]">
                <span className="flex w-[54px] shrink-0 justify-end">Drawing Mode</span>
                <div className="grid h-[9px] flex-1 grid-cols-2 overflow-hidden rounded-[2px] leading-[9px]">
                  <button className="bg-[#4772b3] text-white">Normal</button><button className="bg-[#545454]">X-ray</button>
                </div>
              </div>
              <Row id="theme" label="Icon Theme"><Select id="theme" value="White" /></Row>
              <Row id="info" label="Display Info Texts"><Select id="info" value="Geen" /></Row>
              <Row id="info-color" label="Info Texts Color" dim><button id="info-color" aria-label="Info Texts Color" className="h-[9px] flex-1 rounded-[2px] bg-[#999]" /></Row>
              <Row id="paint" label="Base Paint Color"><button id="paint" aria-label="Base Paint Color" className="h-[9px] flex-1 rounded-[2px] bg-[#b80000]" /></Row>
              <div className="flex h-[13px] items-center gap-[2px] pl-[59px]"><Tick id="preview" checked /><label htmlFor="preview">Show Preview Models</label></div>
              <div className="mt-[4px]">
                {["Locators Display", "Connections Display"].map((n) => (
                  <div key={n} className="flex h-[13px] items-center gap-[2px] pl-[6px]"><ChevronRight className="size-[6px]" strokeWidth={3} /><Tick id={n} checked /><label htmlFor={n}>{n}</label></div>
                ))}
              </div>
            </div>

            <Heading sub>Other Settings</Heading>
            <div className="px-[5px] pb-[4px] pt-[4px]">
              <button className="relative mb-[1px] block h-[10px] w-full rounded-[2px] bg-[#545454] leading-[10px]">
                <svg viewBox="0 0 16 16" className="absolute left-[2px] top-[1px] size-[8px]"><path d="M5 3l8-2v13H4z" fill="#bbb" /><path d="M1 14l6-5M2 8l5 1-1 5" fill="none" stroke="#eee" strokeWidth="1.500" /></svg>Copy BT Log To Clipboard
              </button>
              <Row tight id="log" label="Log Level"><Select id="log" value="2 - Errors, Warnings, Info" icon={<LayersIcon className="mr-px size-[8px]" />} /></Row>
              <Row tight id="global" label="Use Global Settings"><Select id="global" value="From Common Config File" /></Row>
            </div>
          </div>
        </div>
      </div>
    </section>
  );
}

/* ---------- desktop taskbar ---------- */

const apps: { name: string; art: ReactNode; open?: boolean }[] = [
  { name: "Firefox", art: <><circle cx="12" cy="13" r="10" fill="#ff7a1a" /><path d="M12 1c4 3 10 5 10 12a10 10 0 0 1-6 8c4-8 0-12-5-13z" fill="#ffc928" /><circle cx="12" cy="14" r="5.500" fill="#7b45d8" /><path d="M3 6c2 2 8 1 9 4-4 0-5 2-4 5-4 0-6-4-5-9" fill="#ff4a4f" /></> },
  { name: "Messenger", art: <><path d="M12 2c6 0 10 4.500 10 10s-4 10-10 10l-6 2v-4c-3-2-4-5-4-8C2 6 6 2 12 2" fill="#a03cf0" /><path d="M2 13c0 5 5 9 10 9l-6 2z" fill="#1a8cff" /><path d="M5 15l5-5 4 3 5-4-5 6-4-3z" fill="#fff" stroke="#fff" /></> },
  { name: "Explorer", art: <><path d="M2 4h8l2 2h10v15H2z" fill="#f4b526" /><path d="M2 9h20v12H2z" fill="#ffd75e" /><path d="M7 15h10v6H7z" fill="#1f78c8" /></> },
  { name: "Outlook", art: <><path d="M7 6h15v15H7z" fill="#1490df" /><path d="M0 8h12v12H0z" fill="#0f5ea8" /><circle cx="6" cy="14" r="3" fill="none" stroke="#fff" strokeWidth="2" /><path d="M12 1h12v9H12z" fill="#f3d3a4" /><path d="M12 1l6 5 6-5" fill="none" stroke="#c57a2c" strokeWidth="1.500" /></> },
  { name: "Spotify", art: <><circle cx="12" cy="12" r="11" fill="#1ed760" /><path d="M5 8c5-1 10-1 14 1.500M6 12c4-1 8-1 12 1M7 16c3-1 6-.500 9 1" stroke="#123" strokeWidth="2" fill="none" /></> },
  { name: "Background app", art: null },
  { name: "Store", art: <><path d="M2 1h20v22H2z" fill="#a3123f" /><path d="M7 9h10v10H7zM8 6h8v2H8z" fill="#eee" /><path d="M7 13h10" stroke="#a3123f" strokeWidth="2" /></> },
  { name: "Epic Games", art: <><path d="M3 1h18v18l-9 4-9-4z" fill="#25282b" /><text x="12" y="13" fontSize="8" fontWeight="700" textAnchor="middle" fill="#fff">EPIC</text><path d="M8 17h8" stroke="#ddd" /></> },
  { name: "Notepad++", art: <><path d="M4 2h16v21H4z" fill="#e8eed8" /><path d="M6 14c4-6 8-4 12-8v12c-4 3-8 3-12 2z" fill="#76b82a" /><path d="M7 6h8M7 9h6" stroke="#777" /></> },
  { name: "Discord", open: true, art: <><circle cx="12" cy="12" r="12" fill="#5865f2" /><path d="M6 8c4-2 8-2 12 0l2 8c-2 2-3 2-4 2l-1-2H9l-1 2c-1 0-3-1-4-2z" fill="#fff" /><circle cx="9" cy="12.500" r="1.600" fill="#5865f2" /><circle cx="15" cy="12.500" r="1.600" fill="#5865f2" /></> },
];

function Taskbar() {
  return (
    <footer className="flex h-[25px] shrink-0 items-center bg-[#7a531a] font-['Open_Sans',sans-serif] text-white">
      <div className="flex w-[270px] shrink-0 items-center pl-[11px]">
        <button aria-label="Start" className="grid size-[12px] grid-cols-2 gap-px">{[0, 1, 2, 3].map((i) => <span key={i} className="bg-[#46c3f5]" />)}</button>
        <button className="ml-[8px] flex h-[17px] w-[53px] items-center gap-[3px] rounded-full bg-[#8b6228] pl-[11px] font-semibold"><Search className="size-[8px]" strokeWidth={3} />Zoeken</button>
        <button aria-label="Task view" className="ml-[7px]"><svg viewBox="0 0 24 24" className="size-[13px]"><path d="M7 2h16v15H7z" fill="#efefef" /><path d="M1 8h15v14H1z" fill="#8d8d8d" /></svg></button>
        <button aria-label="Weather" className="relative ml-[10px]">
          <svg viewBox="0 0 24 24" className="size-[13px]"><circle cx="10" cy="12" r="9" fill="#f7a022" /><path d="M8 22a4 4 0 0 1 1-8 6 6 0 0 1 11 2 3 3 0 0 1 0 6z" fill="#cfe2fa" /></svg>
          <span className="absolute -top-[2px] left-[4px] rounded-full bg-[#2d2d2d] px-[3px] leading-[7px]">6°</span>
        </button>
        <button aria-label="Chat" className="ml-[9px]"><svg viewBox="0 0 24 24" className="size-[13px]"><circle cx="12" cy="12" r="11" fill="#6b6fd8" /><path d="M5 8h9v8H5zM15 11l4-3v8l-4-3z" fill="#fff" /></svg></button>
        <span className="mb-[9px] ml-[37px] rounded-full bg-[#f2cf2e] px-[2px] font-semibold leading-[8px] text-[#222]">99+</span>
      </div>
      <div className="flex">
        {apps.map((a) => (
          <button key={a.name} aria-label={a.name} className={`flex h-[22px] w-[23px] flex-col items-center justify-end gap-[3px] rounded-[3px] ${a.open ? "bg-[#46242a]" : ""}`}>
            <svg viewBox="0 0 24 24" className="size-[13px]">{a.art}</svg>
            <span className="h-px w-[4px] rounded-full bg-[#c9b694]" />
          </button>
        ))}
        <button aria-label="Blender" className="flex h-[22px] w-[23px] flex-col items-center justify-end gap-[3px] rounded-[3px] bg-[#8a602a]">
          <BlenderLogo className="size-[13px]" /><span className="h-px w-[8px] bg-[#ffcf1c]" />
        </button>
      </div>
      <div className="ml-auto flex items-center gap-[4px] pr-[10px]">
        <button aria-label="Hidden icons"><ChevronUp className="size-[9px]" /></button>
        <span className="size-[8px] rounded-full bg-[#2d2d38]" />
        <svg viewBox="0 0 16 16" className="ml-[1px] size-[9px]"><circle cx="8" cy="8" r="8" fill="#16325e" /><path d="M0 9l6 3 5-5" stroke="#fff" strokeWidth="2.500" fill="none" /><circle cx="11" cy="6" r="3" fill="#fff" /></svg>
        <Mic className="ml-[2px] size-[9px] text-[#e0bd3c]" fill="#e0bd3c" />
        <Monitor className="ml-[4px] size-[9px]" />
        <Volume2 className="size-[9px]" />
        <time className="w-[29px] text-right font-semibold leading-[8px]">17:06<br />3-3-2023</time>
      </div>
    </footer>
  );
}

function Mouse({ side, children }: { side: "left" | "middle" | "right"; children: ReactNode }) {
  return (
    <span className="flex w-[110px] items-center gap-[6px]">
      <svg viewBox="0 0 12 16" className="h-[8px] w-[6px]" fill="none" stroke="#a8a8a8" strokeWidth="1.300">
        <rect x="1" y="1" width="10" height="14" rx="3" />
        <path d={side === "left" ? "M1 2h4v6H1z" : side === "right" ? "M7 2h4v6H7z" : "M5 3h2v5H5z"} fill="#c8c8c8" />
      </svg>
      {children}
    </span>
  );
}

export default function App() {
  return (
    <div className="flex min-h-screen flex-col overflow-hidden bg-[#181818] font-['DejaVu_Sans_Condensed','DejaVu_Sans',sans-serif] text-[6px] leading-[8px] text-[#d6d6d6]">
      <header className="flex h-[12px] shrink-0 items-center bg-[#ffb900] pl-[2px] pr-[9px] font-['Open_Sans',sans-serif] text-[#332a10]">
        <BlenderLogo className="h-[7px] w-[8px]" />
        <h1 className="ml-[2px]">Blender</h1>
        <div className="ml-auto flex items-center gap-[17px]">
          <button aria-label="Minimize"><Minus className="size-[7px]" /></button>
          <button aria-label="Restore"><Square className="size-[6px]" strokeWidth={3} /></button>
          <button aria-label="Close"><X className="size-[8px]" /></button>
        </div>
      </header>

      <div className="flex h-[15px] shrink-0 items-center pl-[5px] pr-[5px]">
        <BlenderLogo mono className="h-[8px] w-[9px]" />
        <nav className="ml-[4px] flex w-[175px] gap-[7px] whitespace-nowrap">{menus.map((m) => <button key={m}>{m}</button>)}</nav>
        <div className="flex items-end self-end text-[#999]" role="tablist">
          {workspaces.map((w, i) => (
            <button key={w} role="tab" aria-selected={i === 0} className={`h-[12px] whitespace-nowrap pl-[5px] pr-[4px] ${i === 0 ? "rounded-t-[3px] bg-[#303030] text-white" : ""}`}>{w}</button>
          ))}
          <button className="h-[12px] px-[4px]">+</button>
        </div>
        <div className="ml-auto flex items-center">
          <button aria-label="Browse scene" className="flex h-[9px] w-[17px] items-center rounded-l-[2px] bg-[#282828] pl-[1px]"><SceneIcon /><Chev /></button>
          <input aria-label="Scene name" defaultValue="Scene" className="h-[9px] w-[52px] bg-[#1d1d1d] pl-[2px]" />
          <Pin className="size-[7px] rotate-45 text-[#777]" />
          <button aria-label="New scene" className="ml-[2px] grid size-[10px] place-items-center bg-[#484848]"><PagesIcon /></button>
          <button aria-label="Remove scene" className="grid size-[10px] place-items-center bg-[#232323]"><X className="size-[6px] text-[#777]" /></button>
          <button aria-label="Browse view layer" className="ml-[6px] flex h-[9px] w-[17px] items-center rounded-l-[2px] bg-[#282828] pl-[1px]"><LayersIcon /><Chev /></button>
          <input aria-label="View layer name" defaultValue="ViewLayer" className="h-[9px] w-[60px] bg-[#1d1d1d] pl-[2px]" />
          <button aria-label="New view layer" className="grid size-[10px] place-items-center bg-[#484848]"><PagesIcon /></button>
          <button aria-label="Remove view layer" className="grid size-[10px] place-items-center bg-[#232323]"><X className="size-[6px] text-[#777]" /></button>
        </div>
      </div>

      <main className="flex flex-1 gap-[2px]">
        <div className="flex min-w-0 flex-1 flex-col gap-[2px]">
          <div className="flex flex-1 gap-[1px]"><Viewport /><Outliner /></div>
          <Timeline />
        </div>
        <Properties />
      </main>

      <div className="flex h-[12px] shrink-0 items-center whitespace-nowrap pl-[6px] pr-[5px] text-[#a0a0a0]">
        <Mouse side="left">Selecteer</Mouse><Mouse side="middle">Rotate View</Mouse><Mouse side="right">Object Context Menu</Mouse>
        <p className="ml-auto">Collection | sidedoor4_sidedoor4_sidedoor_rubber3.005 | Verts:267,889 | Faces:320,265 | Tris:320,265 | Objects:4/24 | Memory: 301.5 MiB | VRAM: 1.5/12.0 GiB | 3.3.1</p>
      </div>
      <Taskbar />
    </div>
  );
}
